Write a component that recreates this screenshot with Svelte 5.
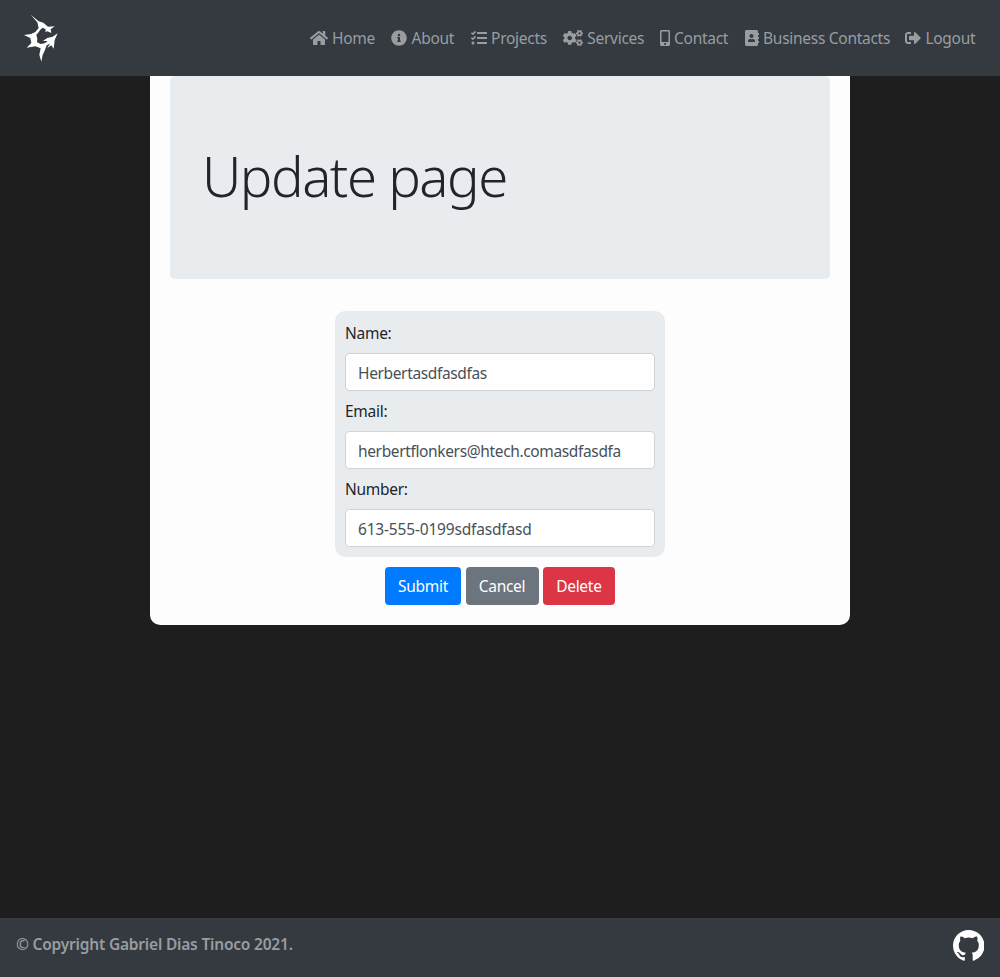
<script>
  const gear = 'M512.1 191l-8.2 14.3c-3 5.3-9.4 7.5-15.1 5.4-11.8-4.4-22.6-10.7-32.1-18.6-4.6-3.8-5.8-10.5-2.8-15.7l8.2-14.3c-6.9-8-12.3-17.3-15.9-27.4h-16.5c-6 0-11.2-4.3-12.2-10.3-2-12-2.1-24.6 0-37.1 1-6 6.2-10.4 12.2-10.4h16.5c3.6-10.1 9-19.4 15.9-27.4l-8.2-14.3c-3-5.2-1.9-11.9 2.8-15.7 9.5-7.9 20.4-14.2 32.1-18.6 5.7-2.1 12.1.1 15.1 5.4l8.2 14.3c10.5-1.9 21.2-1.9 31.7 0L552 6.3c3-5.3 9.4-7.5 15.1-5.4 11.8 4.4 22.6 10.7 32.1 18.6 4.6 3.8 5.8 10.5 2.8 15.7l-8.2 14.3c6.9 8 12.3 17.3 15.9 27.4h16.5c6 0 11.2 4.3 12.2 10.3 2 12 2.1 24.6 0 37.1-1 6-6.2 10.4-12.2 10.4h-16.5c-3.6 10.1-9 19.4-15.9 27.4l8.2 14.3c3 5.2 1.9 11.9-2.8 15.7-9.5 7.9-20.4 14.2-32.1 18.6-5.7 2.1-12.1-.1-15.1-5.4l-8.2-14.3c-10.4 1.9-21.2 1.9-31.7 0zm-10.5-58.8c38.5 29.6 82.4-14.3 52.8-52.8-38.5-29.7-82.4 14.3-52.8 52.8z';
  const bigGear = 'M386.3 286.1l33.7 16.8c10.1 5.8 14.5 18.1 10.5 29.1-8.9 24.2-26.4 46.4-42.6 65.8-7.4 8.9-20.2 11.1-30.3 5.3l-29.1-16.8c-16 13.7-34.6 24.6-54.9 31.7v33.6c0 11.6-8.3 21.6-19.7 23.6-24.6 4.2-50.4 4.4-75.9 0-11.5-2-20-11.9-20-23.6V418c-20.3-7.2-38.9-18-54.9-31.7L74 403c-10 5.8-22.9 3.6-30.3-5.3-16.2-19.4-33.3-41.6-42.2-65.7-4-10.9.4-23.2 10.5-29.1l33.3-16.8c-3.9-20.9-3.9-42.4 0-63.4L12 205.8c-10.1-5.8-14.6-18.1-10.5-29 8.9-24.2 26-46.4 42.2-65.8 7.4-8.9 20.2-11.1 30.3-5.3l29.1 16.8c16-13.7 34.6-24.6 54.9-31.7V57.1c0-11.5 8.2-21.5 19.6-23.5 24.6-4.2 50.5-4.4 76-.1 11.5 2 20 11.9 20 23.6v33.6c20.3 7.2 38.9 18 54.9 31.7l29.1-16.8c10-5.8 22.9-3.6 30.3 5.3 16.2 19.4 33.2 41.6 42.1 65.8 4 10.9.1 23.2-10 29.1l-33.7 16.8c3.9 21 3.9 42.5 0 63.5zm-117.6 21.1c59.2-77-28.7-164.9-105.7-105.7-59.2 77 28.7 164.9 105.7 105.7z';
  const links = [
    { label: 'Home', w: 576, text: 43.6, paths: [['M280.37 148.26L96 300.11V464a16 16 0 0 0 16 16l112.06-.29a16 16 0 0 0 15.92-16V368a16 16 0 0 1 16-16h64a16 16 0 0 1 16 16v95.64a16 16 0 0 0 16 16.05L464 480a16 16 0 0 0 16-16V300L295.67 148.26a12.19 12.19 0 0 0-15.3 0zM571.6 251.47L488 182.56V44.05a12 12 0 0 0-12-12h-56a12 12 0 0 0-12 12v72.61L318.47 43a48 48 0 0 0-61 0L4.34 251.47a12 12 0 0 0-1.6 16.9l25.5 31A12 12 0 0 0 45.15 301l235.22-193.74a12.19 12.19 0 0 1 15.3 0L530.9 301a12 12 0 0 0 16.9-1.6l25.5-31a12 12 0 0 0-1.7-16.93z', 0]] },
    { label: 'About', w: 512, text: 43.6, paths: [['M256 8C119.043 8 8 119.083 8 256c0 136.997 111.043 248 248 248s248-111.003 248-248C504 119.083 392.957 8 256 8zm0 110c23.196 0 42 18.804 42 42s-18.804 42-42 42-42-18.804-42-42 18.804-42 42-42zm56 254c0 6.627-5.373 12-12 12h-88c-6.627 0-12-5.373-12-12v-24c0-6.627 5.373-12 12-12h12v-64h-12c-6.627 0-12-5.373-12-12v-24c0-6.627 5.373-12 12-12h64c6.627 0 12 5.373 12 12v100h12c6.627 0 12 5.373 12 12v24z', 0]] },
    { label: 'Projects', w: 512, text: 56.2, paths: [['M139.61 35.5a12 12 0 0 0-17 0L58.93 98.81l-22.7-22.12a12 12 0 0 0-17 0L3.53 92.41a12 12 0 0 0 0 17l47.59 47.4a12.78 12.78 0 0 0 17.61 0l15.59-15.62L156.52 69a12.09 12.09 0 0 0 .09-17zm0 159.19a12 12 0 0 0-17 0l-63.68 63.72-22.7-22.1a12 12 0 0 0-17 0L3.53 252a12 12 0 0 0 0 17L51 316.5a12.77 12.77 0 0 0 17.6 0l15.7-15.69 72.2-72.22a12 12 0 0 0 .09-16.9zM64 368c-26.49 0-48.59 21.5-48.59 48S37.53 464 64 464a48 48 0 0 0 0-96zm432 16H208a16 16 0 0 0-16 16v32a16 16 0 0 0 16 16h288a16 16 0 0 0 16-16v-32a16 16 0 0 0-16-16zm0-320H208a16 16 0 0 0-16 16v32a16 16 0 0 0 16 16h288a16 16 0 0 0 16-16V80a16 16 0 0 0-16-16zm0 160H208a16 16 0 0 0-16 16v32a16 16 0 0 0 16 16h288a16 16 0 0 0 16-16v-32a16 16 0 0 0-16-16z', 0]] },
    { label: 'Services', w: 640, text: 56.8, paths: [[gear, 0], [bigGear, 0], [gear, 299]] },
    { label: 'Contact', w: 320, text: 55, paths: [['M272 0H48C21.5 0 0 21.5 0 48v416c0 26.5 21.5 48 48 48h224c26.5 0 48-21.5 48-48V48c0-26.5-21.5-48-48-48zM160 480c-17.7 0-32-14.3-32-32s14.3-32 32-32 32 14.3 32 32-14.3 32-32 32zm112-108c0 6.6-5.4 12-12 12H60c-6.6 0-12-5.4-12-12V60c0-6.6 5.4-12 12-12h200c6.6 0 12 5.4 12 12v312z', 0]] },
    { label: 'Business Contacts', w: 448, text: 126.4, paths: [['M436 160c6.6 0 12-5.4 12-12v-40c0-6.6-5.4-12-12-12h-20V48c0-26.5-21.5-48-48-48H48C21.5 0 0 21.5 0 48v416c0 26.5 21.5 48 48 48h320c26.5 0 48-21.5 48-48v-48h20c6.6 0 12-5.4 12-12v-40c0-6.6-5.4-12-12-12h-20v-64h20c6.6 0 12-5.4 12-12v-40c0-6.6-5.4-12-12-12h-20v-64h20zm-228-32c35.3 0 64 28.7 64 64s-28.7 64-64 64-64-28.7-64-64 28.7-64 64-64zm112 236.8c0 10.6-10 19.2-22.4 19.2H118.4C106 384 96 375.4 96 364.8v-19.2c0-31.8 30.1-57.6 67.2-57.6h5c12.3 5.1 25.7 8 39.8 8s27.6-2.9 39.8-8h5c37.1 0 67.2 25.8 67.2 57.6v19.2z', 0]] },
    { label: 'Logout', w: 512, text: 50.6, paths: [['M497 273L329 441c-15 15-41 4.5-41-17v-96H152c-13.3 0-24-10.7-24-24v-96c0-13.3 10.7-24 24-24h136V88c0-21.4 25.9-32 41-17l168 168c9.3 9.4 9.3 24.6 0 34zM192 436v-40c0-6.6-5.4-12-12-12H96c-17.7 0-32-14.3-32-32V160c0-17.7 14.3-32 32-32h84c6.6 0 12-5.4 12-12V76c0-6.6-5.4-12-12-12H96c-53 0-96 43-96 96v192c0 53 43 96 96 96h84c6.6 0 12-5.4 12-12z', 0]] }
  ];

  const fields = [
    { id: 'name', label: 'Name:', value: 'Herbertasdfasdfas' },
    { id: 'email', label: 'Email:', value: 'herbertflonkers@htech.comasdfasdfa' },
    { id: 'number', label: 'Number:', value: '613-555-0199sdfasdfasd' }
  ];
</script>

<div class="page">
  <header>
    <a class="brand" href="#home" aria-label="Home">
      <svg viewBox="0 0 114 156" width="38" height="52">
        <path d="M26 8L50 28L64 32L78 44L98 43L86 52L88 63L76 58L70 60L71 52L62 47L55 53L48 63L43 68L46 80L45 91L56 96L68 94L77 88L63 86L76 78L92 74L107 64L98 84L95 110L88 100L76 108L84 95L74 100L68 116L62 128L58 149L52 128L56 109L40 103L14 107L28 93L25 78L6 69L27 66L40 60L50 48L46 31Z" />
      </svg>
    </a>
    <nav>
      {#each links as link}
        <a href="#{link.label}">
          <svg class="icon" viewBox="0 0 {link.w} 512" style="width: {link.w / 32}px">
            {#each link.paths as [d, dy]}
              <path {d} transform="translate(0 {dy})" />
            {/each}
          </svg>
          <span style="width: {link.text}px">{link.label}</span>
        </a>
      {/each}
    </nav>
  </header>

  <main>
    <section class="hero"><h1>Update page</h1></section>
    <form>
      <div class="fields">
        {#each fields as field}
          <label for={field.id}>{field.label}</label>
          <input id={field.id} class:numeric={field.id === 'number'} value={field.value} />
        {/each}
      </div>
      <div class="actions">
        <button type="button" class="submit">Submit</button>
        <button type="button" class="cancel">Cancel</button>
        <button type="button" class="delete">Delete</button>
      </div>
    </form>
  </main>

  <footer>
    <strong>© Copyright Gabriel Dias Tinoco 2021.</strong>
    <svg viewBox="0 0 16 16" width="31.5" height="31.5">
      <path d="M8 0C3.58 0 0 3.58 0 8c0 3.54 2.29 6.53 5.47 7.59.4.07.55-.17.55-.38 0-.19-.01-.82-.01-1.49-2.01.37-2.53-.49-2.69-.94-.09-.23-.48-.94-.82-1.13-.28-.15-.68-.52-.01-.53.63-.01 1.08.58 1.23.82.72 1.21 1.87.87 2.33.66.07-.52.28-.87.51-1.07-1.78-.2-3.64-.89-3.64-3.95 0-.87.31-1.59.82-2.15-.08-.2-.36-1.02.08-2.12 0 0 .67-.21 2.2.82.64-.18 1.32-.27 2-.27s1.36.09 2 .27c1.53-1.04 2.2-.82 2.2-.82.44 1.1.16 1.92.08 2.12.51.56.82 1.27.82 2.15 0 3.07-1.87 3.75-3.65 3.95.29.25.54.73.54 1.48 0 1.07-.01 1.93-.01 2.2 0 .21.15.46.55.38A8.01 8.01 0 0 0 16 8c0-4.42-3.58-8-8-8z" />
    </svg>
  </footer>
</div>

<style>
  :global(body) {
    margin: 0;
    background: #1e1e1e;
  }
  .page {
    box-sizing: border-box;
    height: 977px;
    display: flex;
    flex-direction: column;
    font-family: 'Noto Sans', 'Open Sans', sans-serif;
    font-size: 15.5px;
    line-height: 24px;
    letter-spacing: -0.28px;
    color: #212529;
  }
  header {
    box-sizing: border-box;
    height: 76px;
    flex: none;
    padding: 0 24px 0 22px;
    display: flex;
    align-items: center;
    justify-content: space-between;
    background: #343a40;
  }
  .brand {
    display: flex;
    fill: #fff;
  }
  .brand svg {
    overflow: visible;
  }
  nav {
    display: flex;
    gap: 15.6px;
  }
  nav a {
    display: flex;
    align-items: center;
    gap: 4.4px;
    color: #999da0;
    text-decoration: none;
  }
  nav span {
    white-space: nowrap;
  }
  .icon {
    height: 16px;
    fill: currentColor;
  }
  main {
    box-sizing: border-box;
    width: 700px;
    height: 549px;
    flex: none;
    align-self: center;
    padding: 0 20px 20px;
    background: #fdfdfd;
    border-radius: 0 0 10px 10px;
  }
  .hero {
    box-sizing: border-box;
    height: 203px;
    padding: 67px 32px 61px;
    background: #e9ecef;
    border-radius: 5px;
  }
  h1 {
    margin: 0;
    font-size: 54.5px;
    font-weight: 270;
    line-height: 67px;
    letter-spacing: -1.5px;
  }
  form {
    margin-top: 32px;
    display: flex;
    flex-direction: column;
    align-items: center;
    gap: 10px;
  }
  .fields {
    box-sizing: border-box;
    width: 330px;
    height: 246px;
    padding: 10px;
    display: flex;
    flex-direction: column;
    background: #e9ecef;
    border-radius: 10px;
  }
  label {
    flex: none;
    height: 24px;
    margin-bottom: 8px;
  }
  input {
    box-sizing: border-box;
    flex: none;
    width: 310px;
    height: 38px;
    margin: 0 0 8px;
    padding: 7px 12px 5px;
    border: 1px solid #ced4da;
    border-radius: 4px;
    background: #fff;
    font: inherit;
    color: #495057;
    letter-spacing: -0.36px;
  }
  .numeric {
    letter-spacing: -0.18px;
  }
  .actions {
    display: flex;
    gap: 4.4px;
  }
  button {
    height: 38px;
    padding: 0;
    border: 0;
    border-radius: 4px;
    font: inherit;
    letter-spacing: inherit;
    color: #fff;
  }
  .submit {
    width: 76px;
    background: #007bff;
  }
  .cancel {
    width: 73px;
    background: #6c757d;
  }
  .delete {
    width: 72px;
    background: #dc3545;
  }
  footer {
    box-sizing: border-box;
    height: 59px;
    margin-top: auto;
    padding: 12px 16px 0;
    display: flex;
    align-items: flex-start;
    justify-content: space-between;
    background: #343a40;
  }
  strong {
    padding-top: 2px;
    font-weight: 600;
    letter-spacing: -0.2px;
    color: #999da0;
  }
  footer svg {
    fill: #fff;
  }
</style>
